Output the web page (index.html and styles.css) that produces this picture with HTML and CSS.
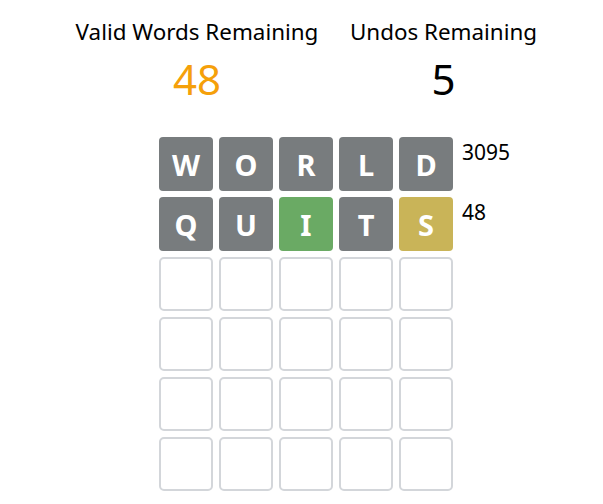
FILE: index.html
```html
<!DOCTYPE html>
<html>
<head>
<meta charset="utf-8">
<link rel="stylesheet" href="styles.css">
</head>
<body>
<div class="page">
  <div class="stats">
    <div class="stat stat-words">
      <div class="stat-label">Valid Words Remaining</div>
      <div class="stat-value orange">48</div>
    </div>
    <div class="stat stat-undos">
      <div class="stat-label">Undos Remaining</div>
      <div class="stat-value">5</div>
    </div>
  </div>
  <div class="board">
    <div class="row">
      <div class="tiles">
        <div class="tile absent">W</div>
        <div class="tile absent">O</div>
        <div class="tile absent">R</div>
        <div class="tile absent">L</div>
        <div class="tile absent">D</div>
      </div>
      <div class="count">3095</div>
    </div>
    <div class="row">
      <div class="tiles">
        <div class="tile absent">Q</div>
        <div class="tile absent">U</div>
        <div class="tile correct">I</div>
        <div class="tile absent">T</div>
        <div class="tile present">S</div>
      </div>
      <div class="count">48</div>
    </div>
    <div class="row">
      <div class="tiles">
        <div class="tile empty"></div><div class="tile empty"></div><div class="tile empty"></div><div class="tile empty"></div><div class="tile empty"></div>
      </div>
    </div>
    <div class="row">
      <div class="tiles">
        <div class="tile empty"></div><div class="tile empty"></div><div class="tile empty"></div><div class="tile empty"></div><div class="tile empty"></div>
      </div>
    </div>
    <div class="row">
      <div class="tiles">
        <div class="tile empty"></div><div class="tile empty"></div><div class="tile empty"></div><div class="tile empty"></div><div class="tile empty"></div>
      </div>
    </div>
    <div class="row">
      <div class="tiles">
        <div class="tile empty"></div><div class="tile empty"></div><div class="tile empty"></div><div class="tile empty"></div><div class="tile empty"></div>
      </div>
    </div>
  </div>
</div>
</body>
</html>
```

FILE: styles.css
```css
html, body {
  margin: 0;
  padding: 0;
  background: #ffffff;
}
body {
  font-family: "Noto Sans", "Open Sans", sans-serif;
  color: #000000;
}
.page {
  width: 603px;
  height: 504px;
  overflow: hidden;
}
.stats {
  display: flex;
  padding-left: 76px;
  padding-top: 17px;
  gap: 33px;
}
.stat {
  display: flex;
  flex-direction: column;
  align-items: center;
}
.stat-words { width: 242px; }
.stat-undos { width: 185px; }
.stat-label {
  font-size: 22.4px;
  line-height: 30px;
  white-space: nowrap;
}
.stat-value {
  font-size: 42px;
  line-height: 52px;
  padding-top: 6px;
}
.orange { color: #f5a00a; }
.board {
  display: flex;
  flex-direction: column;
  gap: 6px;
  padding-left: 159px;
  padding-top: 32px;
}
.row {
  display: flex;
  align-items: flex-start;
}
.tiles {
  display: flex;
  gap: 6px;
}
.tile {
  width: 54px;
  height: 54px;
  box-sizing: border-box;
  border-radius: 4px;
  display: flex;
  align-items: center;
  justify-content: center;
  color: #ffffff;
  font-weight: 700;
  font-size: 29px;
}
.absent { background: #787c7e; }
.correct { background: #6aaa64; }
.present { background: #c9b458; }
.empty {
  border: 2px solid #d3d6da;
  border-radius: 5px;
}
.count {
  margin-left: 9px;
  font-size: 21px;
  line-height: 30px;
}
```
